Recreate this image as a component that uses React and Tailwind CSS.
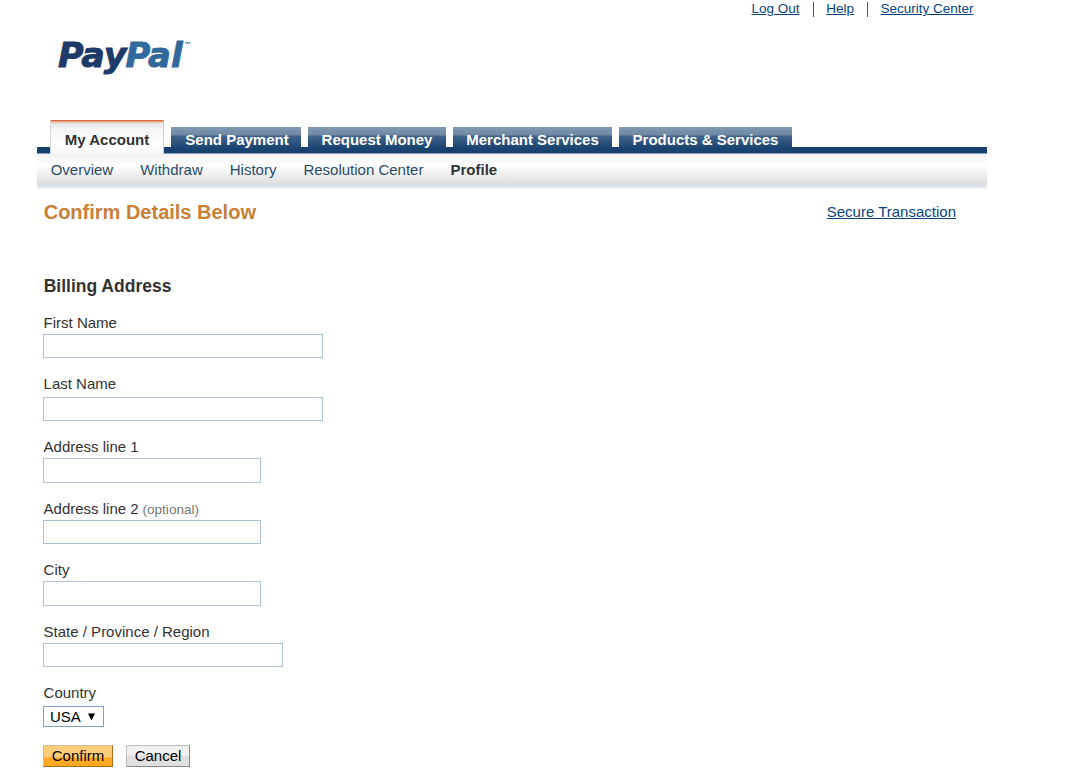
const topLinks = ["Log Out", "Help", "Security Center"];

const tabs = [
  { label: "Send Payment", width: "w-[130px] pl-[2px]" },
  { label: "Request Money", width: "w-[138px]" },
  { label: "Merchant Services", width: "w-[159px]" },
  { label: "Products & Services", width: "w-[173px]" },
];

const subTabs = ["Overview", "Withdraw", "History", "Resolution Center"];

const fields = [
  { id: "first", label: "First Name", row: "h-[61px]", box: "mt-[2px] h-[24px] w-[280px]" },
  { id: "last", label: "Last Name", row: "h-[63px]", box: "mt-[4px] h-[24px] w-[280px]" },
  { id: "line1", label: "Address line 1", row: "h-[62px]", box: "mt-[2px] h-[25px] w-[218px]" },
  { id: "line2", label: "Address line 2", note: "(optional)", row: "h-[61px]", box: "mt-[2px] h-[24px] w-[218px]" },
  { id: "city", label: "City", row: "h-[62px]", box: "mt-[2px] h-[25px] w-[218px]" },
  { id: "state", label: "State / Province / Region", row: "h-[61px]", box: "mt-[2px] h-[24px] w-[240px]" },
];

function Logo() {
  return (
    <svg width="150" height="50" viewBox="0 0 150 50" className="block">
      <g fontFamily="'DejaVu Sans', sans-serif" fontSize="34.5" fontWeight="700" fontStyle="italic" strokeWidth="0.9">
        <text x="8" y="37.3" textLength="68.5" lengthAdjust="spacingAndGlyphs" fill="#1d3a69" stroke="#1d3a69">Pay</text>
        <text x="75.5" y="37.3" textLength="57" lengthAdjust="spacingAndGlyphs" fill="#32699c" stroke="#32699c">Pal</text>
      </g>
      <text x="134.5" y="16" fontFamily="'Liberation Sans', sans-serif" fontSize="6" fontWeight="700" fill="#1d3a69">™</text>
    </svg>
  );
}

function Header() {
  return (
    <header>
      <nav className="flex h-[18px] items-center pl-[751.5px] text-[13.5px] leading-[16px] text-[#084482]">
        {topLinks.map((label, i) => (
          <span key={label} className="flex items-center">
            {i > 0 && <span className="mr-[12.6px] ml-[13px] h-[15px] w-px bg-[#555]" />}
            <a href="#" className="underline">{label}</a>
          </span>
        ))}
      </nav>
      <div className="mt-3 h-[90px] pl-[50px]">
        <Logo />
      </div>
    </header>
  );
}

function Navigation() {
  return (
    <nav className="ml-[37px] w-[950px]">
      <div className="flex h-[34px] items-end bg-[linear-gradient(to_bottom,transparent_27px,#16416f_27px,#16416f_33px,#8ba1b8_33px)] pl-[13px] font-bold">
        <a href="#" className="mr-[7px] h-[34px] w-[114px] border-t border-r border-l border-t-[#d9673c] border-r-[#c9ced4] border-l-[#d8d8d8] bg-[linear-gradient(to_bottom,#e9a789_0px,#e9a789_1px,#e4e4e4_2px,#f4f4f4_8px,#ffffff_24px,#f8f8f8_100%)] pt-[10px] text-center leading-[18px] text-[#333]">
          My Account
        </a>
        <div className="flex h-[34px] gap-[7px] pt-[7px]">
          {tabs.map((tab) => (
            <a
              key={tab.label}
              href="#"
              className={`${tab.width} h-[26px] bg-[linear-gradient(to_bottom,#8299b1_0px,#6f89a5_8px,#416489_9px,#1b4471_21px,#16416f_26px)] pt-[4px] text-center leading-[18px] text-white`}
            >
              {tab.label}
            </a>
          ))}
        </div>
      </div>
      <div className="flex h-[36px] gap-[27px] bg-[linear-gradient(to_bottom,#f0f0f0_0px,#ffffff_11px,#f5f5f5_17px,#dedede_30px,#d8dfe6_31px,#dde5ed_33px,#eff3f7_34px,#f4f7fa_35px,#fff_36px)] pt-[7px] pl-[13.7px] leading-[18px] text-[#294c6c]">
        {subTabs.map((label) => (
          <a key={label} href="#">{label}</a>
        ))}
        <a href="#" className="font-bold text-[#333]">Profile</a>
      </div>
    </nav>
  );
}

export default function App() {
  return (
    <div className="h-[784px] w-[1086px] overflow-hidden bg-white font-['Liberation_Sans',Arial,sans-serif] text-[15px] text-[#333]">
      <Header />
      <Navigation />
      <main className="pl-[43px]">
        <div className="flex h-[124px] justify-between pt-[10px] pl-[0.7px]">
          <h1 className="text-[20px] leading-6 font-bold text-[#c88039]">Confirm Details Below</h1>
          <a href="#" className="mt-[3px] mr-[130px] h-[18px] leading-[18px] text-[#084482] underline">Secure Transaction</a>
        </div>
        <form onSubmit={(e) => e.preventDefault()} className="-mt-[40px]">
          <h2 className="h-[40px] pl-[0.7px] text-[17.5px] leading-[24px] font-bold">Billing Address</h2>
          {fields.map((f) => (
            <div key={f.id} className={f.row}>
              <label htmlFor={f.id} className="block h-[18px] pl-[0.6px] leading-[18px]">
                {f.label}
                {f.note && <span className="text-[13.6px] text-[#757575]"> {f.note}</span>}
              </label>
              <input id={f.id} className={`${f.box} block border border-[#abc1d9] bg-white px-1 outline-none`} />
            </div>
          ))}
          <label htmlFor="country" className="block h-[22px] pl-[0.6px] leading-[18px]">Country</label>
          <div className="flex h-[21px] w-[61px] items-center border border-[#7f9fc6] pt-px pl-[6px] text-black">
            <span id="country">USA</span>
            <svg width="7" height="8" viewBox="0 0 7 8" className="-mt-px ml-[7px]">
              <path d="M0 0.5h7L3.5 7.5z" fill="#000" />
            </svg>
          </div>
          <div className="mt-[18px] flex gap-[13px] text-black">
            <button className="h-[22px] w-[70px] border border-t-[#d5bd98] border-r-[#a86e1d] border-b-[#a86e1d] border-l-[#d5bd98] bg-[linear-gradient(to_bottom,#ffcc7a_0px,#ffcc7a_11px,#ffa822_12px,#ffa822_100%)] leading-[20px]">Confirm</button>
            <button className="h-[22px] w-[64px] border border-t-[#bfbfbf] border-r-[#888] border-b-[#888] border-l-[#bfbfbf] bg-[linear-gradient(to_bottom,#f1f1f1_0px,#f1f1f1_9px,#e0e0e0_10px,#e0e0e0_100%)] leading-[20px]">Cancel</button>
          </div>
        </form>
      </main>
    </div>
  );
}
